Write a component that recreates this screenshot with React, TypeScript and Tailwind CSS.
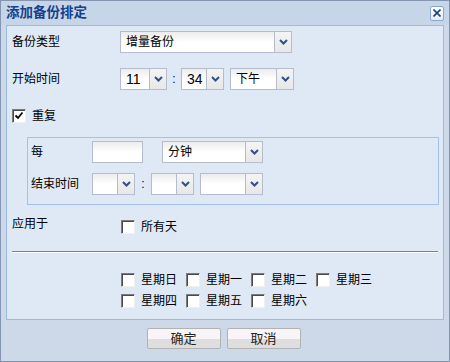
import React from "react";

const Chevron = () => (
  <svg width="9" height="6" viewBox="0 0 9 6">
    <path d="M1 1 L4.5 4.5 L8 1" fill="none" stroke="#2f5189" strokeWidth="2" />
  </svg>
);

function Select({ w, value, text }: { w: string; value?: string; text?: string }) {
  return (
    <div className={`flex h-[22px] border border-[#b4bccd] bg-white ${w}`}>
      <div className={`flex-1 flex items-center pl-[5px] bg-gradient-to-b from-[#ececec] via-white to-white ${text ?? ""}`}>
        {value}
      </div>
      <div className="w-[17px] border-l border-[#b4bccd] bg-gradient-to-b from-[#f4f4f4] to-[#e8e8e8] flex items-center justify-center">
        <Chevron />
      </div>
    </div>
  );
}

function Checkbox({ checked }: { checked?: boolean }) {
  return (
    <div className="w-[14px] h-[14px] bg-white border border-t-[#7c7c7c] border-l-[#7c7c7c] border-r-[#f0f0f0] border-b-[#f0f0f0] shadow-[inset_1px_1px_0_#4a4a4a] flex items-center justify-center">
      {checked && (
        <svg width="10" height="10" viewBox="0 0 10 10">
          <path d="M1.5 4.5 L4 7 L8.5 1.5" fill="none" stroke="#000" strokeWidth="1.8" />
        </svg>
      )}
    </div>
  );
}

function Day({ label }: { label: string }) {
  return (
    <div className="flex items-center w-[65px]">
      <Checkbox />
      <span className="ml-[6px]">{label}</span>
    </div>
  );
}

export default function App() {
  return (
    <div className="w-[450px] h-[362px] bg-[#cdd8e8] border border-[#8395b0] flex flex-col font-['Liberation_Sans','Noto_Sans_CJK_SC',sans-serif] text-[12px] text-black">
      <div className="h-[24px] bg-[#c6d6e8] flex items-center justify-between pl-[5px] pr-[5px]">
        <span className="text-[13.5px] font-bold text-[#15428b] leading-none">添加备份排定</span>
        <div className="w-[14px] h-[15px] rounded-[2px] border border-[#8ba6cf] bg-gradient-to-b from-white to-[#e3ebf6] flex items-center justify-center">
          <svg width="8" height="8" viewBox="0 0 8 8">
            <path d="M0.5 0.5 L7.5 7.5 M7.5 0.5 L0.5 7.5" stroke="#1d3f78" strokeWidth="1.6" />
          </svg>
        </div>
      </div>
      <div className="mx-[5px] h-[295px] border border-[#99bbe8] bg-[#dfe9f5] flex flex-col pl-[5px] pt-[5px]">
        <div className="flex items-center h-[22px]">
          <span className="w-[108px]">备份类型</span>
          <Select w="w-[172px]" value="增量备份" />
        </div>
        <div className="flex items-center h-[22px] mt-[15px]">
          <span className="w-[108px]">开始时间</span>
          <Select w="w-[47px]" value="11" text="text-[14px]" />
          <span className="w-[14px] text-center">:</span>
          <Select w="w-[43px]" value="34" text="text-[14px]" />
          <span className="w-[6px]" />
          <Select w="w-[64px]" value="下午" />
        </div>
        <div className="flex items-center h-[15px] mt-[18px]">
          <Checkbox checked />
          <span className="ml-[6px]">重复</span>
        </div>
        <div className="ml-[15px] mr-[4px] mt-[14px] h-[68px] border border-[#a5c0ea] pl-[3px] pt-[3px] flex flex-col">
          <div className="flex items-center h-[22px]">
            <span className="w-[61px]">每</span>
            <div className="w-[51px] h-[22px] border border-[#b4bccd] bg-gradient-to-b from-[#ececec] via-white to-white" />
            <span className="w-[19px]" />
            <Select w="w-[101px]" value="分钟" />
          </div>
          <div className="flex items-center h-[22px] mt-[10px]">
            <span className="w-[61px]">结束时间</span>
            <Select w="w-[43px]" />
            <span className="w-[16px] text-center">:</span>
            <Select w="w-[43px]" />
            <span className="w-[6px]" />
            <Select w="w-[63px]" />
          </div>
        </div>
        <div className="flex items-start mt-[13px] h-[16px]">
          <span className="w-[109px] leading-[13px]">应用于</span>
          <div className="flex items-center">
            <Checkbox />
            <span className="ml-[6px]">所有天</span>
          </div>
        </div>
        <div className="mt-[17px] mr-[5px] border-t border-[#808080] border-b border-b-white" />
        <div className="mt-[19px] ml-[109px] flex flex-col gap-[6px]">
          <div className="flex h-[15px]">
            <Day label="星期日" />
            <Day label="星期一" />
            <Day label="星期二" />
            <Day label="星期三" />
          </div>
          <div className="flex h-[15px]">
            <Day label="星期四" />
            <Day label="星期五" />
            <Day label="星期六" />
          </div>
        </div>
      </div>
      <div className="flex justify-center gap-[6px] mt-[8px] pr-[3px]">
        <button className="w-[74px] h-[21px] rounded-[2px] border border-[#b2b2b2] bg-[linear-gradient(to_bottom,#f8f4f8_0%,#f8f4f8_55%,#dedede_55%,#dedede_100%)] text-[13px] text-[#222] leading-none">确定</button>
        <button className="w-[74px] h-[21px] rounded-[2px] border border-[#b2b2b2] bg-[linear-gradient(to_bottom,#f8f4f8_0%,#f8f4f8_55%,#dedede_55%,#dedede_100%)] text-[13px] text-[#222] leading-none">取消</button>
      </div>
    </div>
  );
}
